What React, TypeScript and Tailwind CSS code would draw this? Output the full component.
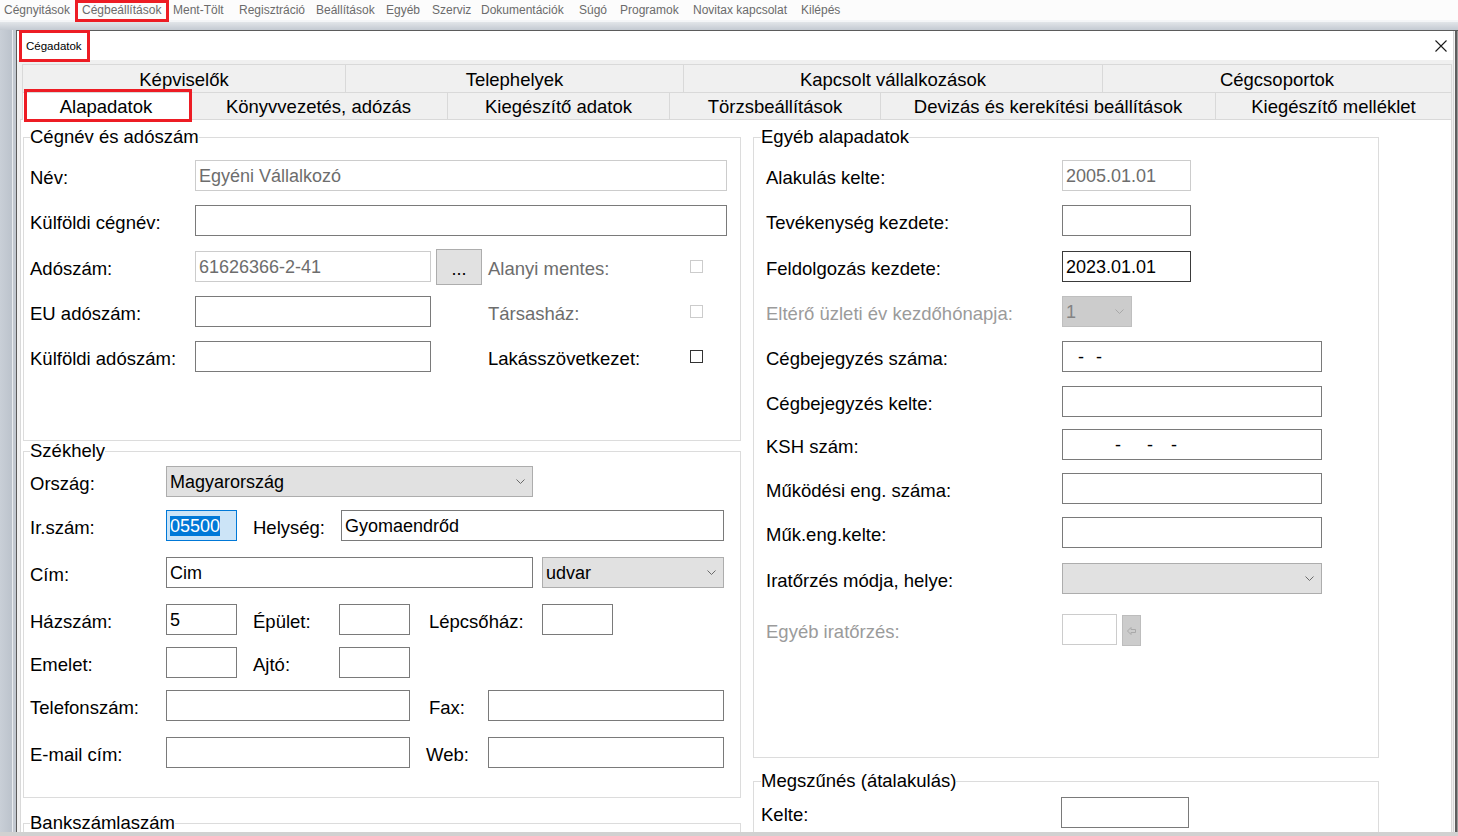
import React from "react";

type Variant = "normal" | "disabled" | "dark" | "focus";

function Input({ className = "", children, variant = "normal" }: { className?: string; children?: React.ReactNode; variant?: Variant }) {
  const v =
    variant === "disabled"
      ? "border-[#cccccc] text-[#6d6d6d] bg-white"
      : variant === "dark"
      ? "border-[#3a3a3a] text-black bg-white"
      : variant === "focus"
      ? "border-[#0078d7] bg-[#cce4f7] text-black"
      : "border-[#7a7a7a] bg-white text-black";
  return (
    <div className={`h-[31px] shrink-0 border flex items-center pl-[3px] text-[18px] leading-[20px] whitespace-pre overflow-hidden ${v} ${className}`}>
      {children}
    </div>
  );
}

function Chevron({ color = "#6a6a6a" }: { color?: string }) {
  return (
    <svg width="9" height="5" viewBox="0 0 9 5" className="shrink-0">
      <path d="M0.5 0.5 L4.5 4.5 L8.5 0.5" fill="none" stroke={color} strokeWidth="1" />
    </svg>
  );
}

function Select({ className = "", children, variant = "normal" }: { className?: string; children?: React.ReactNode; variant?: "normal" | "disabled" }) {
  const v =
    variant === "disabled"
      ? "bg-[#cccccc] border-[#bfbfbf] text-[#838383]"
      : "bg-[#e1e1e1] border-[#adadad] text-black";
  return (
    <div className={`h-[31px] shrink-0 border flex items-center justify-between pl-[3px] pr-[7px] text-[18px] leading-[20px] whitespace-nowrap ${v} ${className}`}>
      <span>{children}</span>
      <Chevron color={variant === "disabled" ? "#a8a8a8" : "#6a6a6a"} />
    </div>
  );
}

function L({ children, className = "" }: { children: React.ReactNode; className?: string }) {
  return <span className={`shrink-0 text-[18.5px] leading-[20px] whitespace-nowrap translate-y-[2px] ${className}`}>{children}</span>;
}

function Check({ disabled }: { disabled?: boolean }) {
  return <div className={`w-[13px] h-[13px] shrink-0 border bg-white ${disabled ? "border-[#cccccc]" : "border-[#333333]"}`} />;
}

const menuItems: { label: string; w: string }[] = [
  { label: "Cégnyitások", w: "w-[78px]" },
  { label: "Cégbeállítások", w: "w-[91px]" },
  { label: "Ment-Tölt", w: "w-[66px]" },
  { label: "Regisztráció", w: "w-[77px]" },
  { label: "Beállítások", w: "w-[70px]" },
  { label: "Egyéb", w: "w-[46px]" },
  { label: "Szerviz", w: "w-[49px]" },
  { label: "Dokumentációk", w: "w-[98px]" },
  { label: "Súgó", w: "w-[41px]" },
  { label: "Programok", w: "w-[73px]" },
  { label: "Novitax kapcsolat", w: "w-[108px]" },
  { label: "Kilépés", w: "w-[60px]" },
];

export default function App() {
  return (
    <div className="w-[1458px] h-[836px] overflow-hidden bg-white flex flex-col text-black font-['Liberation_Sans',Arial,sans-serif]">
      {/* Menu bar */}
      <div className="h-[20px] shrink-0 flex items-center pl-[4px] bg-[#fcfcfc] text-[12px] leading-[14px] text-[#6b6b6b]">
        {menuItems.map((m, i) => (
          <div key={m.label} className={`relative shrink-0 ${m.w}`}>
            {m.label}
            {i === 1 && <div className="absolute -left-[7px] -top-[3px] w-[94px] h-[22px] border-[3px] border-[#ed1c24]" />}
          </div>
        ))}
      </div>
      {/* Band */}
      <div className="h-[10px] shrink-0 flex flex-col">
        <div className="h-[2px] bg-[#f4f5f7]" />
        <div className="flex-1 bg-gradient-to-b from-[#e2e5e9] to-[#c4cad2]" />
      </div>

      {/* Main row */}
      <div className="h-[802px] shrink-0 flex">
        <div className="w-[16px] shrink-0 flex">
          <div className="w-[12px] bg-gradient-to-r from-[#c9cfd7] to-[#bcc3cc]" />
          <div className="w-[1px] bg-[#e9ecef]" />
          <div className="w-[3px] bg-[#c2c8d0]" />
        </div>
        <div className="w-[1442px] shrink-0 flex border-l border-t border-[#5b5b5b]">
          <div className="w-[1436px] shrink-0 flex flex-col">
            {/* Title bar */}
            <div className="h-[29px] shrink-0 bg-white flex items-center justify-between pl-[9px] pr-[6px]">
              <div className="relative text-[11.5px] leading-[14px]">
                Cégadatok
                <div className="absolute -left-[7px] -top-[9px] w-[71px] h-[32px] border-[3px] border-[#ed1c24]" />
              </div>
              <svg width="12" height="12" viewBox="0 0 12 12">
                <path d="M0.5 0.5 L11.5 11.5 M11.5 0.5 L0.5 11.5" stroke="#1a1a1a" strokeWidth="1.1" />
              </svg>
            </div>

            {/* Body */}
            <div className="flex-1 min-h-0 flex flex-col bg-[#f0f0f0] pl-[3px] pr-[1px] pt-[4px]">
              {/* Tabs row 1 */}
              <div className="h-[28px] shrink-0 flex pl-[2px] text-[18.5px] leading-[29px]">
                <div className="w-[323px] shrink-0 border-t border-l border-[#d9d9d9] text-center">Képviselők</div>
                <div className="w-[338px] shrink-0 border-t border-l border-[#d9d9d9] text-center">Telephelyek</div>
                <div className="w-[419px] shrink-0 border-t border-l border-[#d9d9d9] text-center">Kapcsolt vállalkozások</div>
                <div className="w-[350px] shrink-0 border-t border-l border-r border-[#d9d9d9] text-center">Cégcsoportok</div>
              </div>
              {/* Tabs row 2 */}
              <div className="h-[28px] shrink-0 flex text-[18.5px] leading-[28px]">
                <div className="w-[2px] shrink-0 border-b border-[#d9d9d9]" />
                <div className="relative w-[168px] shrink-0 bg-white border-t border-l border-r border-[#d9d9d9] text-center">
                  Alapadatok
                  <div className="absolute left-[1px] -top-[4px] w-[168px] h-[33px] border-[3px] border-[#ed1c24]" />
                </div>
                <div className="w-[257px] shrink-0 border-t border-b border-[#d9d9d9] text-center">Könyvvezetés, adózás</div>
                <div className="w-[222px] shrink-0 border-t border-l border-b border-[#d9d9d9] text-center">Kiegészítő adatok</div>
                <div className="w-[211px] shrink-0 border-t border-l border-b border-[#d9d9d9] text-center">Törzsbeállítások</div>
                <div className="w-[335px] shrink-0 border-t border-l border-b border-[#d9d9d9] text-center">Devizás és kerekítési beállítások</div>
                <div className="w-[237px] shrink-0 border-t border-l border-r border-b border-[#d9d9d9] text-center">Kiegészítő melléklet</div>
              </div>

              {/* Content pane */}
              <div className="flex-1 min-h-0 overflow-hidden bg-white border-l border-r border-[#d9d9d9] flex pl-[2px] pt-[7px]">
                {/* Left column */}
                <div className="w-[718px] shrink-0 flex flex-col">
                  <fieldset className="w-[718px] h-[314px] shrink-0 border border-[#dcdcdc] pl-[6px] min-w-0">
                    <legend className="text-[18.5px] leading-[20px]">Cégnév és adószám</legend>
                    <div className="flex items-center h-[31px] mt-[13px]">
                      <L className="w-[165px]">Név:</L>
                      <Input className="w-[532px]" variant="disabled">Egyéni Vállalkozó</Input>
                    </div>
                    <div className="flex items-center h-[31px] mt-[14px]">
                      <L className="w-[165px]">Külföldi cégnév:</L>
                      <Input className="w-[532px]" />
                    </div>
                    <div className="flex items-center h-[31px] mt-[15px]">
                      <L className="w-[165px]">Adószám:</L>
                      <Input className="w-[236px]" variant="disabled">61626366-2-41</Input>
                      <div className="ml-[5px] w-[46px] h-[36px] shrink-0 bg-[#e1e1e1] border border-[#adadad] flex items-center justify-center text-[18px] leading-[20px] pt-[4px]">...</div>
                      <L className="ml-[6px] w-[202px] text-[#6d6d6d]">Alanyi mentes:</L>
                      <Check disabled />
                    </div>
                    <div className="flex items-center h-[31px] mt-[14px]">
                      <L className="w-[165px]">EU adószám:</L>
                      <Input className="w-[236px]" />
                      <L className="ml-[57px] w-[202px] text-[#6d6d6d]">Társasház:</L>
                      <Check disabled />
                    </div>
                    <div className="flex items-center h-[31px] mt-[14px]">
                      <L className="w-[165px]">Külföldi adószám:</L>
                      <Input className="w-[236px]" />
                      <L className="ml-[57px] w-[202px]">Lakásszövetkezet:</L>
                      <Check />
                    </div>
                  </fieldset>

                  <fieldset className="w-[718px] h-[357px] shrink-0 border border-[#dcdcdc] pl-[6px] min-w-0">
                    <legend className="text-[18.5px] leading-[20px]">Székhely</legend>
                    <div className="flex items-center h-[31px] mt-[5px]">
                      <L className="w-[136px]">Ország:</L>
                      <Select className="w-[367px]">Magyarország</Select>
                    </div>
                    <div className="flex items-center h-[31px] mt-[13px]">
                      <L className="w-[136px]">Ir.szám:</L>
                      <Input className="w-[71px]" variant="focus">
                        <span className="bg-[#0078d7] text-white">05500</span>
                      </Input>
                      <L className="ml-[16px] w-[88px]">Helység:</L>
                      <Input className="w-[383px]">Gyomaendrőd</Input>
                    </div>
                    <div className="flex items-center h-[31px] mt-[16px]">
                      <L className="w-[136px]">Cím:</L>
                      <Input className="w-[367px]">Cim</Input>
                      <Select className="ml-[9px] w-[182px]">udvar</Select>
                    </div>
                    <div className="flex items-center h-[31px] mt-[16px]">
                      <L className="w-[136px]">Házszám:</L>
                      <Input className="w-[71px]">5</Input>
                      <L className="ml-[16px] w-[86px]">Épület:</L>
                      <Input className="w-[71px]" />
                      <L className="ml-[19px] w-[113px]">Lépcsőház:</L>
                      <Input className="w-[71px]" />
                    </div>
                    <div className="flex items-center h-[31px] mt-[12px]">
                      <L className="w-[136px]">Emelet:</L>
                      <Input className="w-[71px]" />
                      <L className="ml-[16px] w-[86px]">Ajtó:</L>
                      <Input className="w-[71px]" />
                    </div>
                    <div className="flex items-center h-[31px] mt-[12px]">
                      <L className="w-[136px]">Telefonszám:</L>
                      <Input className="w-[244px]" />
                      <L className="ml-[19px] w-[59px]">Fax:</L>
                      <Input className="w-[236px]" />
                    </div>
                    <div className="flex items-center h-[31px] mt-[16px]">
                      <L className="w-[136px]">E-mail cím:</L>
                      <Input className="w-[244px]" />
                      <L className="ml-[16px] w-[62px]">Web:</L>
                      <Input className="w-[236px]" />
                    </div>
                  </fieldset>

                  <fieldset className="mt-[15px] w-[718px] h-[80px] shrink-0 border border-[#dcdcdc] pl-[6px] min-w-0">
                    <legend className="text-[18.5px] leading-[20px]">Bankszámlaszám</legend>
                  </fieldset>
                </div>

                {/* Right column */}
                <div className="ml-[12px] w-[626px] shrink-0 flex flex-col">
                  <fieldset className="w-[626px] h-[631px] shrink-0 border border-[#dcdcdc] pl-[7px] min-w-0">
                    <legend className="text-[18.5px] leading-[20px]">Egyéb alapadatok</legend>
                    <div className="pl-[5px] flex flex-col">
                      <div className="flex items-center h-[31px] mt-[13px]">
                        <L className="w-[296px]">Alakulás kelte:</L>
                        <Input className="w-[129px]" variant="disabled">2005.01.01</Input>
                      </div>
                      <div className="flex items-center h-[31px] mt-[14px]">
                        <L className="w-[296px]">Tevékenység kezdete:</L>
                        <Input className="w-[129px]" />
                      </div>
                      <div className="flex items-center h-[31px] mt-[15px]">
                        <L className="w-[296px]">Feldolgozás kezdete:</L>
                        <Input className="w-[129px]" variant="dark">2023.01.01</Input>
                      </div>
                      <div className="flex items-center h-[31px] mt-[14px]">
                        <L className="w-[296px] text-[#9b9b9b]">Eltérő üzleti év kezdőhónapja:</L>
                        <Select className="w-[70px]" variant="disabled">1</Select>
                      </div>
                      <div className="flex items-center h-[31px] mt-[14px]">
                        <L className="w-[296px]">Cégbejegyzés száma:</L>
                        <Input className="w-[260px]">
                          <span className="ml-[12px]">-</span>
                          <span className="ml-[12px]">-</span>
                        </Input>
                      </div>
                      <div className="flex items-center h-[31px] mt-[14px]">
                        <L className="w-[296px]">Cégbejegyzés kelte:</L>
                        <Input className="w-[260px]" />
                      </div>
                      <div className="flex items-center h-[31px] mt-[12px]">
                        <L className="w-[296px]">KSH szám:</L>
                        <Input className="w-[260px]">
                          <span className="ml-[49px]">-</span>
                          <span className="ml-[26px]">-</span>
                          <span className="ml-[18px]">-</span>
                        </Input>
                      </div>
                      <div className="flex items-center h-[31px] mt-[13px]">
                        <L className="w-[296px]">Működési eng. száma:</L>
                        <Input className="w-[260px]" />
                      </div>
                      <div className="flex items-center h-[31px] mt-[13px]">
                        <L className="w-[296px]">Műk.eng.kelte:</L>
                        <Input className="w-[260px]" />
                      </div>
                      <div className="flex items-center h-[31px] mt-[15px]">
                        <L className="w-[296px]">Iratőrzés módja, helye:</L>
                        <Select className="w-[260px]"> </Select>
                      </div>
                      <div className="flex items-center h-[31px] mt-[20px]">
                        <L className="w-[296px] text-[#9b9b9b]">Egyéb iratőrzés:</L>
                        <Input className="w-[55px]" variant="disabled" />
                        <div className="ml-[5px] mt-[2px] w-[19px] h-[31px] shrink-0 bg-[#cccccc] border border-[#bdbdbd] flex items-center justify-center">
                          <svg width="9" height="8" viewBox="0 0 9 8">
                            <path d="M0.5 4 L4 0.5 L4 2.5 L8.5 2.5 L8.5 5.5 L4 5.5 L4 7.5 Z" fill="none" stroke="#a9a9a9" strokeWidth="1" />
                          </svg>
                        </div>
                      </div>
                    </div>
                  </fieldset>

                  <fieldset className="mt-[13px] w-[626px] h-[120px] shrink-0 border border-[#dcdcdc] pl-[7px] min-w-0">
                    <legend className="text-[18.5px] leading-[20px]">Megszűnés (átalakulás)</legend>
                    <div className="flex items-center h-[31px] mt-[6px]">
                      <L className="w-[300px]">Kelte:</L>
                      <Input className="w-[128px]" />
                    </div>
                  </fieldset>
                </div>
              </div>
            </div>
          </div>
          {/* Window right edge */}
          <div className="w-[5px] shrink-0 flex">
            <div className="w-[1px] bg-[#d5d5d5]" />
            <div className="w-[1px] bg-[#f4f4f4]" />
            <div className="w-[2px] bg-[#5e5e5e]" />
            <div className="w-[1px] bg-[#9a9a9a]" />
          </div>
        </div>
      </div>

      {/* Bottom strip */}
      <div className="h-[4px] shrink-0 bg-[#d1d1d1]" />
    </div>
  );
}
